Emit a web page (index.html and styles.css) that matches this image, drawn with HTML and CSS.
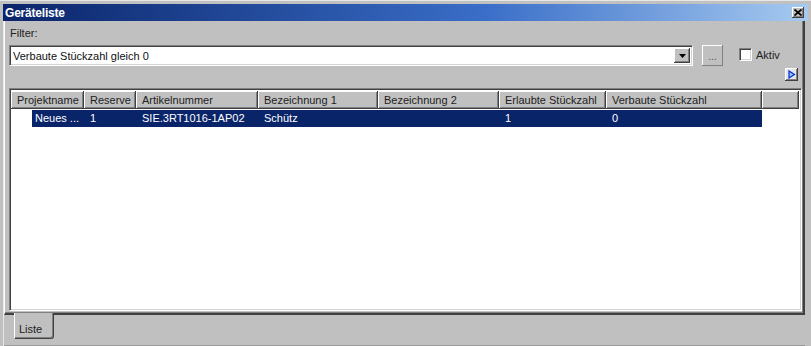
FILE: index.html
```html
<!DOCTYPE html>
<html lang="de">
<head>
    <meta charset="UTF-8">
    <title>Geräteliste</title>
    <link rel="stylesheet" href="styles.css">
</head>
<body>

<div class="window">
    <!-- Title bar -->
    <div class="titlebar">
        <span class="title">Geräteliste</span>
        <span class="close-btn">
            <svg width="8" height="7" viewBox="0 0 8 7"><path d="M0.5 0.5 L7.5 6.5 M7.5 0.5 L0.5 6.5" stroke="#000" stroke-width="1.7"/></svg>
        </span>
    </div>

    <div class="frame">
        <!-- Tab page -->
        <div class="page">
            <div class="filter-label">Filter:</div>

            <div class="filter-row">
                <div class="combo">
                    <span class="combo-text">Verbaute Stückzahl gleich 0</span>
                    <span class="combo-btn">
                        <svg width="7" height="4" viewBox="0 0 7 4"><polygon points="0,0 7,0 3.5,4" fill="#000"/></svg>
                    </span>
                </div>
                <span class="dots-btn">...</span>
                <label class="check">
                    <span class="check-box"></span>
                    <span>Aktiv</span>
                </label>
            </div>

            <div class="arrow-row">
                <span class="arrow-btn">
                    <svg width="9" height="9" viewBox="0 0 9 9"><polygon points="2,1 7.5,4.5 2,8" fill="#8fc0ff" stroke="#0030c8" stroke-width="1.2"/></svg>
                </span>
            </div>

            <div class="listview">
                <div class="lv-header">
                    <div class="hd c1">Projektname</div>
                    <div class="hd c2">Reserve</div>
                    <div class="hd c3">Artikelnummer</div>
                    <div class="hd c4">Bezeichnung 1</div>
                    <div class="hd c5">Bezeichnung 2</div>
                    <div class="hd c6">Erlaubte Stückzahl</div>
                    <div class="hd c7">Verbaute Stückzahl</div>
                    <div class="hd rest"></div>
                </div>
                <div class="lv-row">
                    <div class="indent"></div>
                    <div class="selected">
                        <div class="cell c1s">Neues ...</div>
                        <div class="cell c2">1</div>
                        <div class="cell c3">SIE.3RT1016-1AP02</div>
                        <div class="cell c4">Schütz</div>
                        <div class="cell c5"></div>
                        <div class="cell c6">1</div>
                        <div class="cell c7">0</div>
                    </div>
                </div>
            </div>
        </div>

        <!-- Tabs at the bottom -->
        <div class="tabs">
            <div class="tab">Liste</div>
        </div>
    </div>
</div>

</body>
</html>
```

FILE: styles.css
```css
/* Base */
body {
    margin: 0;
    padding: 0;
    font-family: "Liberation Sans", Arial, sans-serif;
    font-size: 11px;
    color: #000;
    background: #c0c0c0;
}

.window {
    width: 811px;
    height: 346px;
    box-sizing: border-box;
    background: #c0c0c0;
    padding: 4px 3px 0 3px;
    border-top: 1px solid #e8e8e8;
    display: flex;
    flex-direction: column;
    overflow: hidden;
}

/* Title bar */
.titlebar {
    height: 17px;
    flex: none;
    margin-top: -1px;
    background: linear-gradient(to right, #0a246a, #3a6ec8 60%, #a6caf0);
    display: flex;
    align-items: center;
    justify-content: space-between;
    padding: 0 4px 0 2px;
}

.title {
    color: #fff;
    font-weight: bold;
    font-size: 12px;
    letter-spacing: -0.2px;
}

.close-btn {
    width: 12px;
    height: 11px;
    box-sizing: border-box;
    background: #c0c0c0;
    box-shadow: inset -1px -1px #404040, inset 1px 1px #fff, inset -2px -2px #808080;
    display: flex;
    align-items: center;
    justify-content: center;
    padding-bottom: 1px;
}

/* Frame with tab page */
.frame {
    flex: 1;
    display: flex;
    flex-direction: column;
    border-left: 1px solid #e8e8e8;
    padding-right: 3px;
}

.page {
    flex: 1;
    display: flex;
    flex-direction: column;
    padding: 6px 1px 0 4px;
    border-right: 2px solid #404040;
    border-bottom: 2px solid #404040;
    box-shadow: inset -1px -1px #808080;
    border-left: 1px solid #fff;
}

.filter-label {
    line-height: 13px;
    height: 13px;
    padding-left: 1px;
    color: #222;
}

/* Filter row */
.filter-row {
    display: flex;
    align-items: center;
    margin-top: 5px;
    height: 21px;
}

.combo {
    width: 684px;
    height: 21px;
    box-sizing: border-box;
    background: #fff;
    border-top: 1px solid #808080;
    border-left: 1px solid #808080;
    border-right: 1px solid #fff;
    border-bottom: 1px solid #fff;
    box-shadow: inset 1px 1px #404040, inset -1px -1px #d4d4d4;
    display: flex;
    align-items: center;
    justify-content: space-between;
    padding: 2px 2px 2px 3px;
}

.combo-text {
    color: #111;
}

.combo-btn {
    width: 16px;
    height: 15px;
    box-sizing: border-box;
    background: #c0c0c0;
    box-shadow: inset -1px -1px #404040, inset 1px 1px #fff, inset -2px -2px #808080;
    display: flex;
    align-items: center;
    justify-content: center;
}

.dots-btn {
    width: 21px;
    height: 21px;
    margin-left: 9px;
    box-sizing: border-box;
    background: #c0c0c0;
    box-shadow: inset -1px -1px #808080, inset 1px 1px #fff;
    color: #555;
    font-size: 10px;
    display: flex;
    align-items: center;
    justify-content: center;
    padding-top: 2px;
}

.check {
    display: flex;
    align-items: center;
    margin-left: 16px;
    color: #222;
}

.check-box {
    width: 13px;
    height: 13px;
    box-sizing: border-box;
    background: #fff;
    border-top: 1px solid #808080;
    border-left: 1px solid #808080;
    border-right: 1px solid #fff;
    border-bottom: 1px solid #fff;
    box-shadow: inset 1px 1px #404040, inset -1px -1px #d4d4d4;
    margin-right: 4px;
    margin-top: -2px;
}

.check span:last-child {
    margin-top: -1px;
}

/* Small blue arrow button */
.arrow-row {
    display: flex;
    justify-content: flex-end;
    margin-top: 2px;
    padding-right: 4px;
    height: 13px;
}

.arrow-btn {
    width: 13px;
    height: 13px;
    box-sizing: border-box;
    background: #e4e4ec;
    box-shadow: inset -1px -1px #404040, inset 1px 1px #fff, inset -2px -2px #808080;
    display: flex;
    align-items: center;
    justify-content: center;
}

/* List view */
.listview {
    flex: 1;
    margin-top: 7px;
    margin-bottom: 2px;
    background: #fff;
    border-top: 1px solid #808080;
    border-left: 1px solid #808080;
    border-right: 1px solid #fff;
    border-bottom: 1px solid #fff;
    box-shadow: inset 1px 1px #404040, inset -1px -1px #d4d4d4;
    padding: 1px 2px 0 1px;
}

.lv-header {
    display: flex;
    height: 18px;
    margin-top: 1px;
}

.hd {
    box-sizing: border-box;
    height: 18px;
    background: #c0c0c0;
    box-shadow: inset -1px -1px #404040, inset 1px 1px #fff, inset -2px -2px #808080;
    padding: 3px 0 0 6px;
    color: #222;
    white-space: nowrap;
    overflow: hidden;
}

.c1 { width: 73px; }
.c2 { width: 52px; }
.c3 { width: 122px; }
.c4 { width: 120px; }
.c5 { width: 121px; }
.c6 { width: 107px; }
.c7 { width: 156px; }
.rest { flex: 1; }

.lv-row {
    display: flex;
    height: 17px;
    margin-top: 1px;
}

.indent {
    width: 21px;
}

.selected {
    display: flex;
    background: #0a246a;
    color: #fff;
}

.cell {
    box-sizing: border-box;
    padding: 2px 0 0 6px;
    white-space: nowrap;
    overflow: hidden;
}

.c1s {
    width: 52px;
    padding-left: 3px;
}

/* Bottom tabs */
.tabs {
    height: 30px;
    flex: none;
    display: flex;
    padding-left: 10px;
    border-bottom: 1px solid #9a9a9a;
}

.tab {
    width: 40px;
    height: 26px;
    margin-top: -2px;
    box-sizing: border-box;
    background: #c0c0c0;
    border-left: 1px solid #fff;
    border-right: 1px solid #404040;
    border-bottom: 1px solid #404040;
    border-bottom-right-radius: 3px;
    box-shadow: inset -1px -1px #808080;
    padding: 10px 0 0 4px;
    color: #222;
}
```
